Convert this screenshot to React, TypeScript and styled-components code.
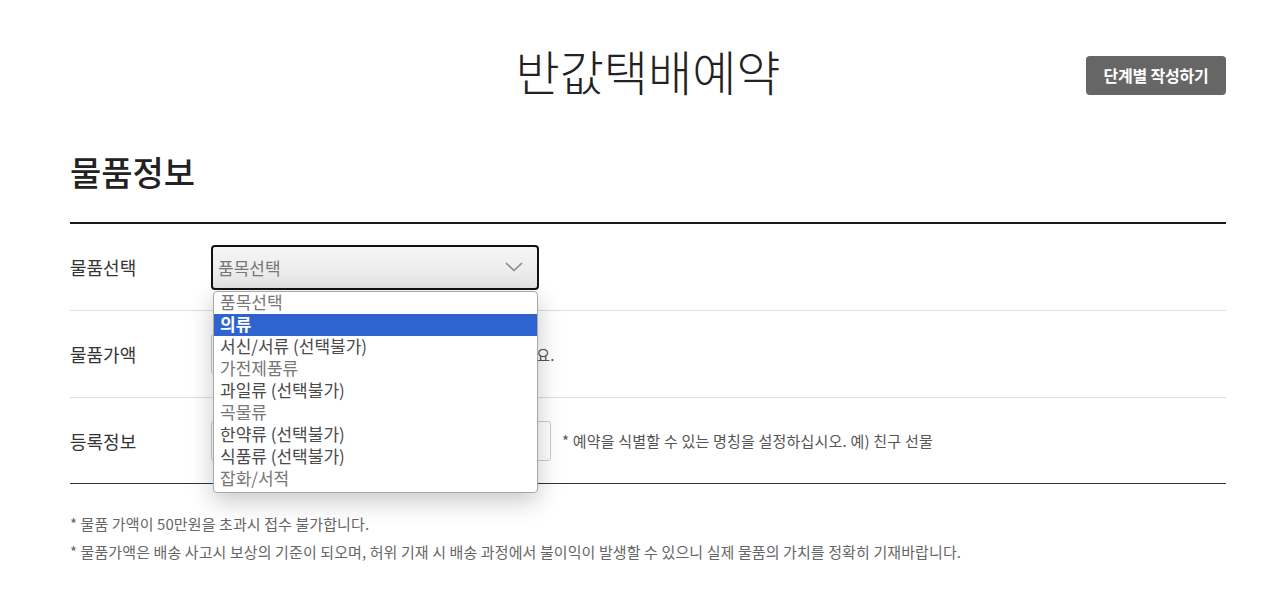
import React from 'react';
import styled, { createGlobalStyle } from 'styled-components';

const GlobalStyle = createGlobalStyle`
  html, body {
    margin: 0;
    padding: 0;
    background: #fff;
    font-family: "Noto Sans CJK KR", "Noto Sans", sans-serif;
    color: #222;
  }
`;

const Page = styled.div`
  width: 1156px;
  margin: 0 auto 0 70px;
`;

const Header = styled.div`
  display: grid;
  grid-template-columns: 1fr auto 1fr;
  align-items: center;
  height: 140px;
`;

const Title = styled.h1`
  grid-column: 2;
  margin: 0;
  font-size: 48px;
  font-weight: 300;
  color: #222;
`;

const StepButton = styled.button`
  grid-column: 3;
  justify-self: end;
  width: 140px;
  height: 39px;
  border: 0;
  border-radius: 4px;
  background: #666;
  color: #fff;
  font-family: inherit;
  font-size: 16px;
  font-weight: 700;
  letter-spacing: -0.2px;
  margin-top: 10px;
`;

const SectionTitle = styled.h2`
  margin: 0;
  font-size: 34px;
  font-weight: 500;
  color: #222;
  line-height: 1;
  padding-top: 15px;
  padding-bottom: 33px;
`;

const Table = styled.div`
  border-top: 2px solid #1a1a1a;
  border-bottom: 1px solid #333;
`;

const Row = styled.div<{ $last?: boolean }>`
  display: flex;
  align-items: center;
  height: ${p => (p.$last ? 85 : 86)}px;
  border-bottom: ${p => (p.$last ? '0' : '1px solid #ddd')};
`;

const Label = styled.div`
  width: 141px;
  flex-shrink: 0;
  font-size: 18px;
  color: #333;
`;

const Content = styled.div`
  display: flex;
  align-items: center;
  gap: 8px;
`;

const SelectWrap = styled.div`
  position: relative;
  z-index: 5;
`;

const SelectBox = styled.div`
  box-sizing: border-box;
  width: 328px;
  height: 45px;
  border: 2px solid #111;
  border-radius: 4px;
  background: linear-gradient(#f6f6f6, #e5e5e5);
  display: flex;
  align-items: center;
  justify-content: space-between;
  padding: 0 14px 0 5px;
  font-size: 17px;
  color: #777;
`;

const OptionList = styled.ul`
  position: absolute;
  top: 46px;
  left: 2px;
  width: 325px;
  box-sizing: border-box;
  margin: 0;
  padding: 0 0 2px;
  list-style: none;
  background: #fff;
  border: 1px solid #a8a8a8;
  border-radius: 4px;
  box-shadow: 0 8px 24px rgba(0, 0, 0, 0.22);
  overflow: hidden;
`;

const OptionItem = styled.li<{ $active?: boolean; $dim?: boolean }>`
  height: 22px;
  line-height: 20px;
  padding-left: 6px;
  font-size: 17px;
  background: ${p => (p.$active ? '#2f63cf' : 'transparent')};
  color: ${p => (p.$active ? '#fff' : p.$dim ? '#777' : '#4a4a4a')};
  font-weight: ${p => (p.$active ? 700 : 400)};
`;

const TextInput = styled.input<{ $w: number }>`
  box-sizing: border-box;
  width: ${p => p.$w}px;
  height: 40px;
  border: 1px solid #ccc;
  border-radius: 3px;
  font-family: inherit;
`;

const Unit = styled.span`
  font-size: 15px;
  color: #333;
`;

const Note = styled.span<{ $offset?: number }>`
  font-size: 15px;
  color: #555;
  letter-spacing: 0.2px;
  margin-left: ${p => p.$offset ?? 0}px;
`;

const Footnotes = styled.div`
  padding-top: 30px;
  display: flex;
  flex-direction: column;
  gap: 8px;
`;

const Footnote = styled.p`
  margin: 0;
  font-size: 15px;
  color: #666;
  letter-spacing: 0.1px;
  line-height: 20px;
`;

const options = [
  { text: '품목선택', dim: true },
  { text: '의류', active: true },
  { text: '서신/서류 (선택불가)' },
  { text: '가전제품류', dim: true },
  { text: '과일류 (선택불가)' },
  { text: '곡물류', dim: true },
  { text: '한약류 (선택불가)' },
  { text: '식품류 (선택불가)' },
  { text: '잡화/서적', dim: true },
];

const Chevron = () => (
  <svg width="18" height="10" viewBox="0 0 18 10" fill="none">
    <path d="M1 1l8 7.5L17 1" stroke="#888" strokeWidth="1.6" />
  </svg>
);

export default function App() {
  return (
    <>
      <GlobalStyle />
      <Page>
        <Header>
          <Title>반값택배예약</Title>
          <StepButton>단계별 작성하기</StepButton>
        </Header>
        <SectionTitle>물품정보</SectionTitle>
        <Table>
          <Row>
            <Label>물품선택</Label>
            <SelectWrap>
              <SelectBox>
                <span>품목선택</span>
                <Chevron />
              </SelectBox>
              <OptionList>
                {options.map(o => (
                  <OptionItem key={o.text} $active={o.active} $dim={o.dim}>
                    {o.text}
                  </OptionItem>
                ))}
              </OptionList>
            </SelectWrap>
          </Row>
          <Row>
            <Label>물품가액</Label>
            <Content>
              <TextInput $w={134} />
              <Unit>원</Unit>
              <Note>* 물품 가액을 입력해 주세요.</Note>
            </Content>
          </Row>
          <Row $last>
            <Label>등록정보</Label>
            <Content>
              <TextInput $w={340} />
              <Note $offset={3}>* 예약을 식별할 수 있는 명칭을 설정하십시오. 예) 친구 선물</Note>
            </Content>
          </Row>
        </Table>
        <Footnotes>
          <Footnote>* 물품 가액이 50만원을 초과시 접수 불가합니다.</Footnote>
          <Footnote>* 물품가액은 배송 사고시 보상의 기준이 되오며, 허위 기재 시 배송 과정에서 불이익이 발생할 수 있으니 실제 물품의 가치를 정확히 기재바랍니다.</Footnote>
        </Footnotes>
      </Page>
    </>
  );
}
